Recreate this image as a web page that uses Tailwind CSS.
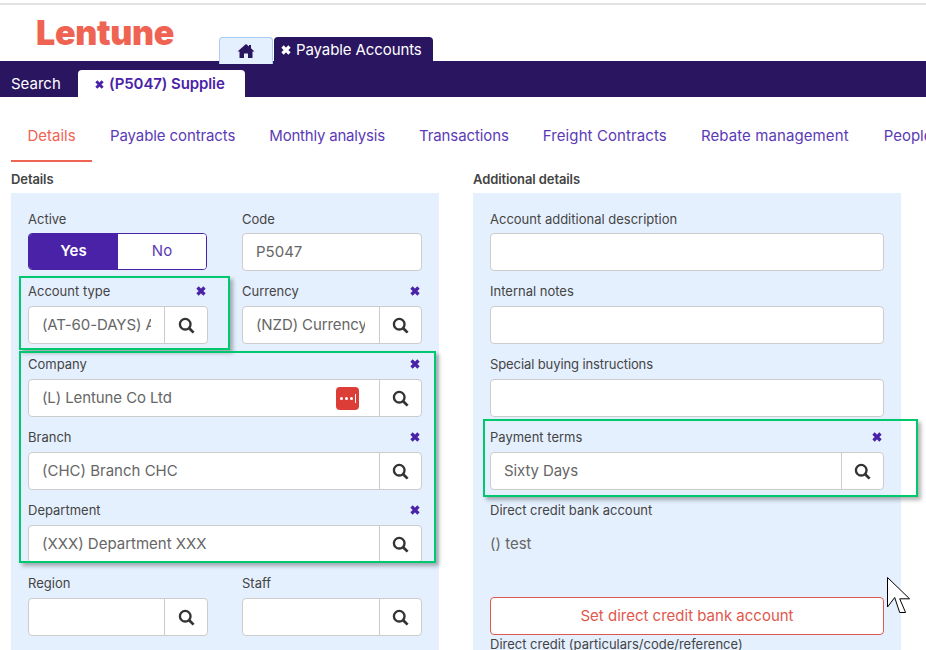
<!DOCTYPE html>
<html lang="en">
<head>
  <meta charset="UTF-8" />
  <title>Lentune</title>
  <script src="https://cdn.jsdelivr.net/npm/@tailwindcss/browser@4"></script>
</head>
<body class="relative w-[926px] h-[650px] overflow-hidden bg-white font-['Inter',sans-serif] text-[#444]">

  <!-- Header -->
  <div class="h-[61px] border-t-[2px] border-[#e2e2e2] mt-[3px] -mb-[3px] relative flex items-end">
    <div class="w-[219px] h-full pl-[36px] pt-[8px] text-[34px] leading-[40px] font-black tracking-[-0.3px] text-[#ef6353]">Lentune</div>
    <div class="w-[54px] h-[27px] bg-[#e5f0fe] border border-b-0 border-[#a9cdf7] rounded-t-[4px] flex items-center justify-center">
      <svg viewBox="0 0 576 512" class="w-[18px] h-[16px] fill-[#2a1560]"><path d="M288 32 16 272h64v208h144V336h128v144h144V272h64L448 166V64h-64v46z"/></svg>
    </div>
    <div class="ml-px w-[159px] h-[27px] bg-[#2a1560] rounded-t-[4px] flex items-center pl-[7px] gap-[5px] text-white text-[15px] tracking-[-0.1px]">
      <svg viewBox="0 0 10 10" class="w-[10px] h-[10px] -mt-[2px] stroke-white"><path d="M1.500 1.500l7 7M8.500 1.500l-7 7" stroke-width="3.200"/></svg>
      <span>Payable Accounts</span>
    </div>
  </div>

  <!-- Module bar -->
  <div class="h-[36px] bg-[#2a1560] flex items-end">
    <div class="w-[78px] h-[27px] pl-[11px] text-white text-[15px] leading-[27px]">Search</div>
    <div class="w-[167px] h-[27px] pt-px bg-white rounded-t-[4px] flex items-center pl-[17px] gap-[5px] text-[#4a22a8] text-[15px] font-semibold tracking-[-0.1px]">
      <svg viewBox="0 0 10 10" class="w-[9px] h-[9px] stroke-[#4a22a8]"><path d="M1.500 1.500l7 7M8.500 1.500l-7 7" stroke-width="3.200"/></svg>
      <span>(P5047) Supplie</span>
    </div>
  </div>

  <!-- Tabs -->
  <div class="h-[65px] pl-[11px] flex items-start text-[15px] text-[#5b3bb5] whitespace-nowrap">
    <div class="w-[81px] shrink-0 h-[65px] pt-[30px] leading-[18px] text-center text-[#ef6353] border-b-[2px] border-[#ef6353]">Details</div>
    <div class="ml-[18px] shrink-0 pt-[30px] leading-[18px] tracking-[-0.1px]">Payable contracts</div>
    <div class="ml-[34px] shrink-0 pt-[30px] leading-[18px] tracking-[-0.2px]">Monthly analysis</div>
    <div class="ml-[34px] shrink-0 pt-[30px] leading-[18px] tracking-[-0.1px]">Transactions</div>
    <div class="ml-[34px] shrink-0 pt-[30px] leading-[18px] tracking-[0.1px]">Freight Contracts</div>
    <div class="ml-[34px] shrink-0 pt-[30px] leading-[18px] tracking-[0.1px]">Rebate management</div>
    <div class="ml-[35px] shrink-0 pt-[30px] leading-[18px]">People</div>
  </div>

  <!-- Two panels -->
  <div class="flex pl-[11px] gap-[34px]">

    <section class="w-[428px] shrink-0">
      <h2 class="h-[31px] pt-[10px] text-[13px] leading-[15px] font-semibold tracking-[-0.1px]">Details</h2>
      <div class="bg-[#e5f0fe] h-[460px] px-[17px] pt-[18px] text-[13px]">
        <div class="flex h-[73px] gap-[34px]">
          <div class="w-[180px]">
            <div class="h-[22px] leading-[16px]">Active</div>
            <div class="flex h-[37px] w-[179px] rounded-[4px] border border-[#4a22a8] overflow-hidden text-[15px]">
              <div class="w-[89px] bg-[#4a22a8] text-white font-semibold flex items-center justify-center">Yes</div>
              <div class="flex-1 bg-white text-[#5b3bb5] flex items-center justify-center">No</div>
            </div>
          </div>
          <div class="w-[180px]">
            <div class="h-[22px] leading-[16px]">Code</div>
            <div class="h-[38px] bg-white border border-[#ccc] rounded-[4px] pl-[13px] pt-px flex items-center text-[15px] text-[#666]">P5047</div>
          </div>
        </div>

        <div class="flex h-[73px] gap-[34px]">
          <div class="w-[180px]">
            <div class="h-[22px] leading-[14px] flex justify-between pr-[2px]"><span>Account type</span>
              <svg viewBox="0 0 10 10" class="w-[10px] h-[10px] mt-[2px] stroke-[#4a22a8]"><path d="M1.500 1.500l7 7M8.500 1.500l-7 7" stroke-width="3.200"/></svg></div>
            <div class="flex h-[38px] bg-white border border-[#ccc] rounded-[4px]">
              <div class="w-[136px] pl-[13px] pr-[13px] leading-[36px] text-[15px] text-[#666] tracking-[-0.1px] border-r border-[#ccc]"><div class="overflow-hidden whitespace-nowrap">(AT-60-DAYS) Account</div></div>
              <div class="flex-1 flex items-center justify-center">
                <svg viewBox="0 0 16 16" class="w-[17px] h-[17px] fill-none stroke-[#333]"><circle cx="6.800" cy="6.800" r="5" stroke-width="2.200"/><path d="M10.500 10.500l4.200 4.200" stroke-width="2.600"/></svg>
              </div>
            </div>
          </div>
          <div class="w-[180px]">
            <div class="h-[22px] leading-[14px] flex justify-between pr-[2px]"><span>Currency</span>
              <svg viewBox="0 0 10 10" class="w-[10px] h-[10px] mt-[2px] stroke-[#4a22a8]"><path d="M1.500 1.500l7 7M8.500 1.500l-7 7" stroke-width="3.200"/></svg></div>
            <div class="flex h-[38px] bg-white border border-[#ccc] rounded-[4px]">
              <div class="w-[137px] pl-[13px] pr-[14px] leading-[36px] text-[15px] text-[#666] tracking-[-0.1px] border-r border-[#ccc]"><div class="overflow-hidden whitespace-nowrap">(NZD) Currency NZD</div></div>
              <div class="flex-1 flex items-center justify-center">
                <svg viewBox="0 0 16 16" class="w-[17px] h-[17px] fill-none stroke-[#333]"><circle cx="6.800" cy="6.800" r="5" stroke-width="2.200"/><path d="M10.500 10.500l4.200 4.200" stroke-width="2.600"/></svg>
              </div>
            </div>
          </div>
        </div>

        <div class="h-[73px] w-[394px]">
          <div class="h-[22px] leading-[14px] flex justify-between pr-[2px]"><span>Company</span>
            <svg viewBox="0 0 10 10" class="w-[10px] h-[10px] mt-[2px] stroke-[#4a22a8]"><path d="M1.500 1.500l7 7M8.500 1.500l-7 7" stroke-width="3.200"/></svg></div>
          <div class="flex h-[38px] bg-white border border-[#ccc] rounded-[4px]">
            <div class="w-[351px] pl-[13px] pr-[20px] flex items-center justify-between text-[15px] text-[#666] tracking-[-0.1px] border-r border-[#ccc]">
              <span>(L) Lentune Co Ltd</span>
              <div class="w-[23px] h-[23px] rounded-[4px] bg-[#dc3d36] flex items-center justify-center gap-[2px]">
                <span class="w-[3px] h-[3px] bg-white rounded-full"></span>
                <span class="w-[3px] h-[3px] bg-white rounded-full"></span>
                <span class="w-[3px] h-[3px] bg-white rounded-full"></span>
                <span class="w-px h-[9px] bg-white"></span>
              </div>
            </div>
            <div class="flex-1 flex items-center justify-center">
              <svg viewBox="0 0 16 16" class="w-[17px] h-[17px] fill-none stroke-[#333]"><circle cx="6.800" cy="6.800" r="5" stroke-width="2.200"/><path d="M10.500 10.500l4.200 4.200" stroke-width="2.600"/></svg>
            </div>
          </div>
        </div>

        <div class="h-[73px] w-[394px]">
          <div class="h-[22px] leading-[14px] flex justify-between pr-[2px]"><span>Branch</span>
            <svg viewBox="0 0 10 10" class="w-[10px] h-[10px] mt-[2px] stroke-[#4a22a8]"><path d="M1.500 1.500l7 7M8.500 1.500l-7 7" stroke-width="3.200"/></svg></div>
          <div class="flex h-[38px] bg-white border border-[#ccc] rounded-[4px]">
            <div class="w-[351px] pl-[13px] leading-[36px] text-[15px] text-[#666] border-r border-[#ccc]">(CHC) Branch CHC</div>
            <div class="flex-1 flex items-center justify-center">
              <svg viewBox="0 0 16 16" class="w-[17px] h-[17px] fill-none stroke-[#333]"><circle cx="6.800" cy="6.800" r="5" stroke-width="2.200"/><path d="M10.500 10.500l4.200 4.200" stroke-width="2.600"/></svg>
            </div>
          </div>
        </div>

        <div class="h-[73px] w-[394px]">
          <div class="h-[22px] leading-[14px] flex justify-between pr-[2px]"><span>Department</span>
            <svg viewBox="0 0 10 10" class="w-[10px] h-[10px] mt-[2px] stroke-[#4a22a8]"><path d="M1.500 1.500l7 7M8.500 1.500l-7 7" stroke-width="3.200"/></svg></div>
          <div class="flex h-[38px] bg-white border border-[#ccc] rounded-[4px]">
            <div class="w-[351px] pl-[13px] leading-[36px] text-[15px] text-[#666] border-r border-[#ccc]">(XXX) Department XXX</div>
            <div class="flex-1 flex items-center justify-center">
              <svg viewBox="0 0 16 16" class="w-[17px] h-[17px] fill-none stroke-[#333]"><circle cx="6.800" cy="6.800" r="5" stroke-width="2.200"/><path d="M10.500 10.500l4.200 4.200" stroke-width="2.600"/></svg>
            </div>
          </div>
        </div>

        <div class="flex h-[73px] gap-[34px]">
          <div class="w-[180px]">
            <div class="h-[22px] leading-[14px]">Region</div>
            <div class="flex h-[38px] bg-white border border-[#ccc] rounded-[4px]">
              <div class="w-[136px] border-r border-[#ccc]"></div>
              <div class="flex-1 flex items-center justify-center">
                <svg viewBox="0 0 16 16" class="w-[17px] h-[17px] fill-none stroke-[#333]"><circle cx="6.800" cy="6.800" r="5" stroke-width="2.200"/><path d="M10.500 10.500l4.200 4.200" stroke-width="2.600"/></svg>
              </div>
            </div>
          </div>
          <div class="w-[180px]">
            <div class="h-[22px] leading-[14px]">Staff</div>
            <div class="flex h-[38px] bg-white border border-[#ccc] rounded-[4px]">
              <div class="w-[137px] border-r border-[#ccc]"></div>
              <div class="flex-1 flex items-center justify-center">
                <svg viewBox="0 0 16 16" class="w-[17px] h-[17px] fill-none stroke-[#333]"><circle cx="6.800" cy="6.800" r="5" stroke-width="2.200"/><path d="M10.500 10.500l4.200 4.200" stroke-width="2.600"/></svg>
              </div>
            </div>
          </div>
        </div>
      </div>
    </section>

    <section class="w-[428px] shrink-0">
      <h2 class="h-[31px] pt-[10px] text-[13px] leading-[15px] font-semibold tracking-[-0.1px]">Additional details</h2>
      <div class="bg-[#e5f0fe] h-[460px] px-[17px] pt-[18px] text-[13px]">
        <div class="h-[73px]">
          <div class="h-[22px] leading-[16px]">Account additional description</div>
          <div class="h-[38px] bg-white border border-[#ccc] rounded-[4px]"></div>
        </div>
        <div class="h-[73px]">
          <div class="h-[22px] leading-[14px]">Internal notes</div>
          <div class="h-[38px] bg-white border border-[#ccc] rounded-[4px]"></div>
        </div>
        <div class="h-[73px]">
          <div class="h-[22px] leading-[14px] tracking-[-0.1px]">Special buying instructions</div>
          <div class="h-[38px] bg-white border border-[#ccc] rounded-[4px]"></div>
        </div>
        <div class="h-[73px]">
          <div class="h-[22px] leading-[14px] flex justify-between pr-[2px]"><span>Payment terms</span>
            <svg viewBox="0 0 10 10" class="w-[10px] h-[10px] mt-[2px] stroke-[#4a22a8]"><path d="M1.500 1.500l7 7M8.500 1.500l-7 7" stroke-width="3.200"/></svg></div>
          <div class="flex h-[38px] bg-white border border-[#ccc] rounded-[4px]">
            <div class="w-[351px] pl-[13px] leading-[36px] text-[15px] text-[#666] tracking-[-0.1px] border-r border-[#ccc]">Sixty Days</div>
            <div class="flex-1 flex items-center justify-center">
              <svg viewBox="0 0 16 16" class="w-[17px] h-[17px] fill-none stroke-[#333]"><circle cx="6.800" cy="6.800" r="5" stroke-width="2.200"/><path d="M10.500 10.500l4.200 4.200" stroke-width="2.600"/></svg>
            </div>
          </div>
        </div>
        <div class="h-[94px]">
          <div class="h-[22px] leading-[14px]">Direct credit bank account</div>
          <div class="text-[15px] leading-[38px] text-[#666]">() test</div>
        </div>
        <div class="h-[38px] bg-white border border-[#e0584d] rounded-[4px] flex items-center justify-center text-[15px] text-[#e0584d]">Set direct credit bank account</div>
        <div class="mt-[2px] leading-[14px] whitespace-nowrap">Direct credit (particulars/code/reference)</div>
      </div>
    </section>
  </div>

  <!-- Green annotation boxes drawn over the screenshot -->
  <div class="absolute left-[19px] top-[276px] w-[211px] h-[74px] border-[2px] border-[#00c86e] shadow-[3px_3px_4px_rgba(0,0,0,0.3)]"></div>
  <div class="absolute left-[19px] top-[351px] w-[417px] h-[212px] border-[2px] border-[#00c86e] shadow-[3px_3px_4px_rgba(0,0,0,0.3)]"></div>
  <div class="absolute left-[483px] top-[419px] w-[435px] h-[78px] border-[2px] border-[#00c86e] shadow-[3px_3px_4px_rgba(0,0,0,0.3)]"></div>

  <!-- Mouse cursor -->
  <svg viewBox="0 0 24 37" class="absolute left-[887px] top-[577px] w-[24px] h-[37px]"><path d="M.5.500V30L7.700 20.500l5 15h5.900l-5.900-13.700h9.900z" fill="#fff" stroke="#000" stroke-width="1"/></svg>
</body>
</html>
